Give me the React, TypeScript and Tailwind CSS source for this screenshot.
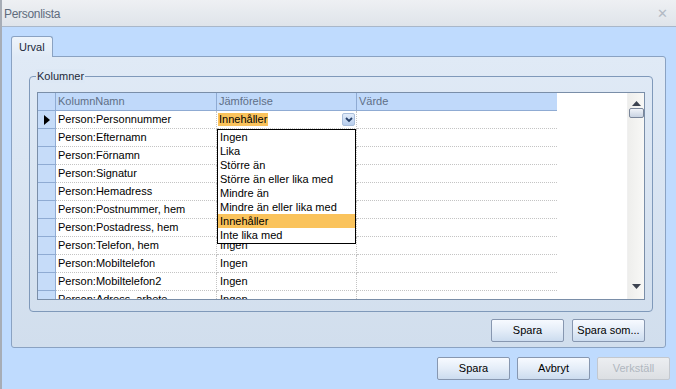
import React from "react";

const rows: [string, string][] = [
  ["Person:Personnummer", "Innehåller"],
  ["Person:Efternamn", ""],
  ["Person:Förnamn", ""],
  ["Person:Signatur", ""],
  ["Person:Hemadress", ""],
  ["Person:Postnummer, hem", ""],
  ["Person:Postadress, hem", ""],
  ["Person:Telefon, hem", "Ingen"],
  ["Person:Mobiltelefon", "Ingen"],
  ["Person:Mobiltelefon2", "Ingen"],
  ["Person:Adress, arbete", "Ingen"],
];

const options = [
  "Ingen",
  "Lika",
  "Större än",
  "Större än eller lika med",
  "Mindre än",
  "Mindre än eller lika med",
  "Innehåller",
  "Inte lika med",
];

function Btn({ label, disabled }: { label: string; disabled?: boolean }) {
  return (
    <div
      className={
        disabled
          ? "w-[73px] h-[23px] flex items-center justify-center rounded-[2px] border border-[#c3c8cf] bg-gradient-to-b from-[#eceef1] to-[#dcdfe3] text-[#b0b7c0] text-[11px]"
          : "w-[73px] h-[23px] flex items-center justify-center rounded-[2px] border border-[#8797b0] bg-gradient-to-b from-[#f7faff] via-[#e4edf8] to-[#ccdcef] text-black text-[11px]"
      }
    >
      {label}
    </div>
  );
}

export default function App() {
  return (
    <div className="w-[676px] h-[389px] flex flex-col bg-[#bfdbfe] border-l-2 border-[#a7adb6] font-['Liberation_Sans',Arial,sans-serif] overflow-hidden">
      {/* Title bar */}
      <div className="h-[27px] shrink-0 flex items-center justify-between pt-[2px] pl-[2px] pr-[8px] bg-gradient-to-b from-[#eef0f3] to-[#dfe4ea] border-b border-[#a9b7c9]">
        <span className="text-[12px] text-[#5f6c7d] tracking-[-0.3px]">Personlista</span>
        <span className="text-[13px] text-[#b3bac4]">✕</span>
      </div>

      {/* Tab strip */}
      <div className="pt-[9px] pl-[9px] flex shrink-0">
        <div className="relative z-10 w-[42px] h-[21px] flex items-center pl-[7px] text-[11px] text-[#1d2a3a] rounded-t-[3px] border border-b-0 border-[#8aa2c2] bg-gradient-to-b from-[#eef4fb] to-[#e0eaf6]">
          Urval
        </div>
      </div>

      {/* Tab panel */}
      <div className="ml-[9px] mr-[10px] -mt-[1px] h-[292px] shrink-0 flex flex-col border border-[#8aa2c2] rounded-b-[3px] rounded-tr-[3px] bg-gradient-to-b from-[#e0eaf6] to-[#d1deed]">
        {/* Group box */}
        <div className="relative mt-[19px] ml-[17px] mr-[12px] h-[236px] border border-[#7f99ba] rounded-[4px] pt-[15px] pl-[7px] pr-[7px] pb-[11px]">
          <span className="absolute left-[6px] -top-[8px] px-[1px] text-[11px] text-[#1d2a3a] bg-[#dde8f5] leading-[14px]">
            Kolumner
          </span>

          {/* Data grid */}
          <div className="relative h-[208px] border border-[#7a8ea8] bg-white flex overflow-hidden">
            <div className="flex-1 flex flex-col overflow-hidden">
              {/* Header */}
              <div className="flex h-[18px] shrink-0 text-[11px] text-[#5f6f86]">
                <div className="w-[18px] shrink-0 bg-[#c3dafa] border-r border-b border-[#8fabd3]" />
                <div className="w-[161px] shrink-0 bg-[#c0d9fa] border-r border-b border-[#8fabd3] flex items-center pl-[2px]">
                  KolumnNamn
                </div>
                <div className="w-[140px] shrink-0 bg-[#c0d9fa] border-r border-b border-[#8fabd3] flex items-center pl-[2px]">
                  Jämförelse
                </div>
                <div className="w-[200px] shrink-0 bg-[#c0d9fa] border-b border-[#8fabd3] flex items-center pl-[2px]">
                  Värde
                </div>
              </div>
              {/* Rows */}
              <div className="flex-1 overflow-hidden">
                {rows.map(([name, cmp], i) => (
                  <div key={i} className="flex h-[18px] text-[11px] text-black">
                    <div className="w-[18px] shrink-0 bg-[#c6dcf9] border-r border-b border-[#8fabd3] flex items-center justify-center">
                      {i === 0 && (
                        <svg width="6" height="10" viewBox="0 0 6 10">
                          <path d="M0 0 L6 5 L0 10 Z" fill="#000" />
                        </svg>
                      )}
                    </div>
                    <div className="w-[161px] shrink-0 border-r border-b border-dotted border-[#c4c4c4] flex items-center pl-[2px]">
                      {name}
                    </div>
                    <div className="relative w-[140px] shrink-0 border-r border-b border-dotted border-[#c4c4c4] flex items-center pl-[1px]">
                      {i === 0 ? (
                        <>
                          <span className="bg-[#fac35c] px-[1px] leading-[13px]">{cmp}</span>
                          <div className="absolute right-[1px] top-[2px] w-[13px] h-[13px] rounded-[2px] border border-[#a9bedb] bg-gradient-to-b from-[#e2ecfa] to-[#b7cdec] flex items-center justify-center">
                            <svg width="8" height="6" viewBox="0 0 8 6">
                              <path d="M1 1 L4 4 L7 1" stroke="#27416a" strokeWidth="1.8" fill="none" />
                            </svg>
                          </div>
                        </>
                      ) : (
                        <span className="pl-[2px]">{cmp}</span>
                      )}
                    </div>
                    <div className="w-[200px] shrink-0 border-b border-dotted border-[#c4c4c4]" />
                  </div>
                ))}
              </div>
            </div>

            {/* Scrollbar */}
            <div className="w-[17px] shrink-0 flex flex-col items-center bg-gradient-to-r from-[#eeeeec] to-[#f8f8f6] border-l border-[#f0f0f0]">
              <div className="h-[14px] flex items-end justify-center pb-[2px] mt-[1px]">
                <svg width="9" height="5" viewBox="0 0 9 5">
                  <path d="M0 5 L4.5 0 L9 5 Z" fill="#3c4350" />
                </svg>
              </div>
              <div className="w-[15px] h-[10px] rounded-[2px] border border-[#7a869a] bg-gradient-to-b from-[#f1f4f9] to-[#c9d3e2]" />
              <div className="flex-1" />
              <div className="h-[14px] flex items-start justify-center pt-[2px] mb-[3px]">
                <svg width="9" height="5" viewBox="0 0 9 5">
                  <path d="M0 0 L4.5 5 L9 0 Z" fill="#3c4350" />
                </svg>
              </div>
            </div>

            {/* Dropdown list */}
            <div className="absolute left-[179px] top-[36px] w-[139px] h-[115px] bg-white border border-black flex flex-col text-[11px] text-black">
              {options.map((o) => (
                <div
                  key={o}
                  className={
                    o === "Innehåller"
                      ? "h-[14px] flex items-center pl-[2px] bg-[#fac35c]"
                      : "h-[14px] flex items-center pl-[2px]"
                  }
                >
                  {o}
                </div>
              ))}
            </div>
          </div>
        </div>

        {/* Panel buttons */}
        <div className="mt-[7px] pr-[20px] flex justify-end gap-[8px]">
          <Btn label="Spara" />
          <Btn label="Spara som..." />
        </div>
      </div>

      {/* Bottom buttons */}
      <div className="mt-[9px] pr-[6px] flex justify-end gap-[7px]">
        <Btn label="Spara" />
        <Btn label="Avbryt" />
        <Btn label="Verkställ" disabled />
      </div>
    </div>
  );
}
